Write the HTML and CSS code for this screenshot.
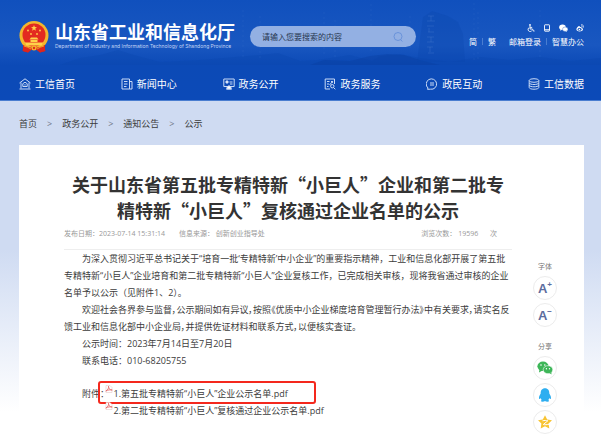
FILE: index.html
```html
<!DOCTYPE html>
<html lang="zh-CN">
<head>
<meta charset="utf-8">
<meta name="viewport" content="width=device-width, initial-scale=1">
<title>山东省工业和信息化厅</title>
<link rel="stylesheet" href="styles.css">
</head>
<body>
<header class="header">
  <svg class="scenery" viewBox="0 0 601 65" preserveAspectRatio="none" aria-hidden="true">
    <path d="M60 65L80 58L100 55L118 50L134 55L160 62L200 60L260 55L278 53L300 61L318 60L350 55L372 61L380 56L400 54L420 58L450 62L480 57L510 60L540 57L570 61L601 58V65Z" fill="#0a45ad" opacity=".3"/>
    <path d="M310 65L324 60L350 61L370 56L388 54L404 55L420 60L440 65Z" fill="#083d9f" opacity=".35"/>
    <path d="M417 62L423 17L432 11L448 16L458 22L463 34L465 62Z" fill="#0a45ad" opacity=".3"/>
    <path d="M243 10V58M260 16V60M324 12V54M335 20V60M371 4V52M410 16V50M474 3V60M478 12V60M540 10V60" stroke="#6f9ce2" stroke-dasharray="2 3" opacity=".1"/>
    <path d="M428 16h6M431 16v5M427 21h8M427 26h7M429 28v4M428 32h6M427 37h7M431 37v5M427 42h7M427 47h6M430 47v5M428 53h6" fill="none" stroke="#6f9ce2" opacity=".2"/>
  </svg>
  <div class="top">
    <a class="brand" href="#">
      <svg class="emblem" viewBox="0 0 30 32" aria-hidden="true">
        <path d="M5 24L3.500 30L9 31.500L12 29H18L21 31.500L26.500 30L25 24Z" fill="#d8201c"/>
        <circle cx="15" cy="14.500" r="14.500" fill="#f3b62d"/>
        <circle cx="15" cy="14" r="11.500" fill="#e32a20"/>
        <path d="M15 4l.8 2.100 2.200.1-1.700 1.400.6 2.200L15 8.600l-1.900 1.200.6-2.200L12 6.200l2.200-.1z" fill="#ffd24a"/>
        <g fill="#ffd24a"><circle cx="9" cy="9.500" r=".9"/><circle cx="21" cy="9.500" r=".9"/><circle cx="12" cy="13" r=".9"/><circle cx="18" cy="13" r=".9"/>
        <path d="M10.500 18.500L12 16.500H18L19.500 18.500ZM11.500 19H18.500V21H11.500ZM6 21.500H24L22.500 24.500H7.500Z"/></g>
        <path d="M4 24Q15 30 26 24L26 30L21 31.500L18 29H12L9 31.500L4 30Z" fill="#dc261e"/>
        <circle cx="15" cy="27" r="2.500" fill="#f3b62d"/><circle cx="15" cy="27" r="1.200" fill="#e32a20"/>
        <path d="M5 25q4 1 7 3M25 25q-4 1-7 3" fill="none" stroke="#f3b62d" stroke-width=".8"/>
      </svg>
      <span class="brand-text">
        <strong class="brand-name">山东省工业和信息化厅</strong>
        <span class="brand-en">Department of Industry and Information Technology of Shandong Province</span>
      </span>
    </a>
    <form class="search">
      <input class="search-input" type="text" placeholder="请输入您要搜索的内容" aria-label="搜索">
      <button class="search-button" type="button" aria-label="搜索">
        <svg viewBox="0 0 10 10"><circle cx="5" cy="4.500" r="4" /><path d="M7.500 7.500L9.300 9.500"/></svg>
      </button>
    </form>
    <div class="tools">
      <div class="tool-icons">
        <a href="#" aria-label="无障碍"><svg viewBox="0 0 8 8"><circle cx="3" cy="1" r=".9" fill="#fff"/><path d="M3 2V5H5.500L6.600 7.200L7.500 7M3.200 3.400H5.200M2.200 3.600A2.100 2.100 0 1 0 5 6.500" fill="none" stroke="#fff" stroke-width=".9"/></svg></a>
        <a href="#" aria-label="移动端"><svg viewBox="0 0 8 8"><rect x="1.500" y=".8" width="5" height="6.400" rx=".5" fill="none" stroke="#fff" stroke-width=".9"/><path d="M1.500 5.800H6.500" stroke="#fff"/></svg></a>
        <a href="#" aria-label="微信"><svg class="wide" viewBox="0 0 9 8"><ellipse cx="3.500" cy="3.200" rx="3.300" ry="2.700" fill="#fff"/><path d="M1.500 5L1.200 6.800L3 5.700Z" fill="#fff"/><ellipse cx="6.200" cy="5.200" rx="2.700" ry="2.200" fill="#fff" stroke="#1a57bd" stroke-width=".4"/><path d="M7.500 6.700L8 7.800L6.500 7.200Z" fill="#fff"/></svg></a>
        <a href="#" aria-label="微博"><svg viewBox="0 0 8 8"><path d="M3.500 2C2 2 .4 4 .4 5.300C.4 8.300 7 8 7 5.200C7 4.300 6 4.200 5.600 4C5.900 3 5 2.900 3.600 3.400C3.900 2.800 3.900 2 3.500 2Z" fill="#fff"/><ellipse cx="3.600" cy="5.400" rx="2" ry="1.300" fill="#1a57bd"/><circle cx="3.400" cy="5.500" r=".8" fill="#fff"/><path d="M5 .8C7 .4 8 2 7.400 3.600M5.200 2.100C6.200 1.900 6.500 2.600 6.300 3.300" fill="none" stroke="#fff" stroke-width=".7"/></svg></a>
      </div>
      <div class="tool-links">
        <a href="#">简</a><span class="bar"></span><a href="#">繁</a>
        <a class="mail" href="#">邮箱登录</a><span class="bar"></span><a href="#">智慧办公</a>
      </div>
    </div>
  </div>
  <nav class="nav">
    <a href="#"><svg viewBox="0 0 12 12"><path d="M.5 5L6 .8L11.500 5M2 4.500V10.500M10 4.500V10.500M.5 11H11.500"/><path d="M6 4.200L8.200 5.700V8.500H3.800V5.700Z"/><path d="M6 6.200V7.500"/></svg>工信首页</a>
    <a href="#"><svg viewBox="0 0 12 12"><path d="M1 1H8.500V11H1ZM8.500 3.500H11V11H8.500M3 3.500H6.500M3 6H6.500M3 8.500H5.500"/></svg>新闻中心</a>
    <a href="#"><svg viewBox="0 0 12 12"><path d="M.8 1H11.200V8.500H.8ZM6.500 4H9.500M7 6H9.500M3 11H9"/><path d="M3 3H5V5H3ZM4 9.500L6 7.500L8 9.500V11H4Z" fill="#fff"/></svg>政务公开</a>
    <a href="#"><svg viewBox="0 0 12 12"><path d="M10.500 6V1H1.200V11H6M3 3.500H5.500M3 6H5M3 8.500H4.500M7 3L8.800 4.800M9 3L5.500 7"/><circle cx="8.300" cy="8.200" r="1.700"/><path d="M9.500 9.500L11.300 11.300"/></svg>政务服务</a>
    <a href="#"><svg viewBox="0 0 12 12"><path d="M2 10A5.200 5.200 0 1 1 4.500 11.200L1.500 11.300Z"/><path d="M4 5H8M4 7H8"/></svg>政民互动</a>
    <a href="#"><svg viewBox="0 0 12 12"><ellipse cx="6" cy="2.500" rx="4.800" ry="1.800"/><path d="M1.200 2.500V9.500C1.200 11.800 10.800 11.800 10.800 9.500V2.500M1.200 5C2 7 10 7 10.800 5M1.200 7.300C2 9.300 10 9.300 10.800 7.300"/></svg>工信数据</a>
  </nav>
</header>
<nav class="crumbs" aria-label="面包屑">
  <a href="#">首页</a><span>&gt;</span><a href="#">政务公开</a><span>&gt;</span><a href="#">通知公告</a><span>&gt;</span><a href="#">公示</a>
</nav>
<main class="card">
  <article class="article">
    <h1 class="title">关于山东省第五批专精特新“小巨人”企业和第二批专精特新“小巨人”复核通过企业名单的公示</h1>
    <div class="meta">
      <span>发布日期：2023-07-14 15:31:14</span>
      <span>信息来源： 创新创业指导处</span>
      <span class="views">浏览次数： 19596 <span class="unit">次</span></span>
    </div>
    <div class="content">
      <p>为深入贯彻习近平总书记关于“培育一批‘专精特新’中小企业”的重要指示精神，工业和信息化部开展了第五批专精特新“小巨人”企业培育和第二批专精特新“小巨人”企业复核工作，已完成相关审核，现将我省通过审核的企业名单予以公示（见附件1、2）。</p>
      <p class="notice">欢迎社会各界参与监督，公示期间如有异议，按照《优质中小企业梯度培育管理暂行办法》中有关要求，请实名反馈工业和信息化部中小企业局，并提供佐证材料和联系方式，以便核实查证。</p>
      <p>公示时间：2023年7月14日至7月20日</p>
      <p>联系电话：010-68205755</p>
      <div class="attachments">
        <span class="attachments-label">附件：</span>
        <ul>
          <li class="marked"><svg viewBox="0 0 8 8" aria-hidden="true"><path d="M1 .5H5L7 2.500V7.500H1Z" fill="#fff" stroke="#e4c9c9" stroke-width=".6"/><path d="M.8 6C3 5 3.800 3 3.500 1.200C3.700 4 5 5 7.200 5C5 4.500 3 5 .8 6Z" fill="none" stroke="#e46464" stroke-width=".8"/></svg><a href="#">1.第五批专精特新“小巨人”企业公示名单.pdf</a></li>
          <li><svg viewBox="0 0 8 8" aria-hidden="true"><path d="M1 .5H5L7 2.500V7.500H1Z" fill="#fff" stroke="#e4c9c9" stroke-width=".6"/><path d="M.8 6C3 5 3.800 3 3.500 1.200C3.700 4 5 5 7.200 5C5 4.500 3 5 .8 6Z" fill="none" stroke="#e46464" stroke-width=".8"/></svg><a href="#">2.第二批专精特新“小巨人”复核通过企业公示名单.pdf</a></li>
        </ul>
      </div>
    </div>
  </article>
  <aside class="side">
    <div class="side-group">
      <span class="side-label">字体</span>
      <button class="round" type="button" aria-label="放大字体">A<sup>+</sup></button>
      <button class="round" type="button" aria-label="缩小字体">A<sup>−</sup></button>
    </div>
    <div class="side-group">
      <span class="side-label">分享</span>
      <button class="round" type="button" aria-label="分享到微信"><svg viewBox="0 0 16 16"><ellipse cx="6" cy="6.300" rx="5.600" ry="4.800" fill="#3db658"/><path d="M2.500 9L2 12.500L5.500 10.500Z" fill="#3db658"/><ellipse cx="11" cy="9.700" rx="4.800" ry="4" fill="#3db658" stroke="#fff" stroke-width=".6"/><path d="M12.500 13L14.500 14.500L14.300 12Z" fill="#3db658"/><g fill="#fff"><circle cx="4" cy="5" r=".8"/><circle cx="7.800" cy="5" r=".8"/><circle cx="9.400" cy="8.700" r=".7"/><circle cx="12.500" cy="8.700" r=".7"/></g></svg></button>
      <button class="round" type="button" aria-label="分享到QQ"><svg viewBox="0 0 16 16"><path d="M8 1.200C5 1.200 3.500 3.500 3.700 6.500C2.500 8.300 1.500 10.500 2.200 12C2.600 12.300 3.200 11.600 3.600 11C3.900 12 4.300 12.500 4.800 13C3.500 13.500 3.600 14.800 5.500 14.800C6.700 14.800 7.500 14.500 8 14C8.500 14.500 9.300 14.800 10.500 14.800C12.400 14.800 12.500 13.500 11.200 13C11.700 12.500 12.100 12 12.400 11C12.800 11.600 13.400 12.300 13.800 12C14.500 10.500 13.500 8.300 12.300 6.500C12.500 3.500 11 1.200 8 1.200Z" fill="#2eaef0"/></svg></button>
      <button class="round" type="button" aria-label="分享到QQ空间"><svg viewBox="0 0 16 16"><path d="M8 1.200L10.200 5.500L15 6.300L11.600 9.600L12.300 14.500L8 12.300L3.700 14.500L4.400 9.600L1 6.300L5.800 5.500Z" fill="#f8c433"/><path d="M5.500 6.800C7.500 6.300 9 6.400 10.800 6.800L6.300 10.500C8 10.900 9.800 10.800 12 10.200" fill="none" stroke="#fff"/></svg></button>
    </div>
  </aside>
</main>
</body>
</html>
```

FILE: styles.css
```css
* {
  box-sizing: border-box;
}

body {
  margin: 0;
  min-height: 100vh;
  display: flex;
  flex-direction: column;
  overflow: hidden;
  font-family: "Open Sans", "Noto Sans CJK SC", sans-serif;
  font-size: 9px;
  color: #3c3c3c;
  background: linear-gradient(#cfdbf2 0, #cfdbf2 250px, #fff 412px);
}

a {
  color: inherit;
  text-decoration: none;
}

button,
input {
  font: inherit;
  border: 0;
  padding: 0;
  background: none;
}

svg {
  display: block;
  flex: none;
}

.header {
  position: relative;
  color: #fff;
  border-bottom: 1px solid #4a7dd0;
  background: linear-gradient(#1050bd 0, #1957c0 45px, #0c4ab6 65px, #0c4ab8 100px);
}

.scenery {
  position: absolute;
  top: 0;
  left: 0;
  width: 100%;
  height: 65px;
}

.top {
  position: relative;
  display: flex;
  align-items: center;
  height: 67px;
  padding: 6px 17px 0 19px;
}

.brand {
  display: flex;
  align-items: center;
  gap: 6px;
}

.emblem {
  width: 30px;
  height: 32px;
}

.brand-text {
  display: flex;
  flex-direction: column;
  padding-bottom: 4px;
}

.brand-name {
  font: bold 18px/23px "Noto Sans CJK SC", sans-serif;
}

.brand-en {
  font: 5px/6px Inter, "Liberation Sans", sans-serif;
  color: #c3d5f5;
  white-space: nowrap;
}

.search {
  display: flex;
  align-items: center;
  width: 166px;
  height: 21px;
  margin-left: 15px;
  padding: 0 13px 0 12px;
  border-radius: 11px;
  background: #93b0e3;
}

.search-input {
  flex: 1;
  min-width: 0;
  font-size: 8px;
  outline: 0;
}

.search-input::placeholder {
  color: #27364f;
  opacity: 1;
}

.search-button svg {
  width: 10px;
  height: 10px;
  fill: none;
  stroke: #6a93da;
}

.tools {
  margin-left: auto;
  display: flex;
  flex-direction: column;
  align-items: flex-end;
  gap: 4px;
  padding-bottom: 2px;
}

.tool-icons {
  display: flex;
  gap: 8px;
}

.tool-icons svg {
  width: 8px;
  height: 8px;
}

.tool-icons .wide {
  width: 9px;
}

.tool-links {
  display: flex;
  align-items: center;
  font-size: 8px;
  line-height: 12px;
}

.bar {
  width: 1px;
  height: 7px;
  margin: 0 5px;
  background: #4a7dd0;
}

.mail {
  margin-left: 13px;
}

.nav {
  display: flex;
  justify-content: space-between;
  align-items: center;
  height: 33px;
  padding: 0 17px 0 19px;
  font-size: 10px;
  line-height: 14px;
}

.nav a {
  display: flex;
  align-items: center;
  gap: 4px;
}

.nav svg {
  width: 12px;
  height: 12px;
  fill: none;
  stroke: #c9daf6;
  stroke-width: 1;
}

.crumbs {
  display: flex;
  align-items: center;
  height: 44px;
  padding: 0 19px;
}

.crumbs span {
  margin: 0 10px;
  color: #6e7685;
}

.card {
  flex: 1;
  display: flex;
  margin: 0 17px 0 19px;
  padding: 26px 27px 0 45px;
  background: #fff;
}

.article {
  flex: 1;
  min-width: 0;
}

.title {
  margin: 0;
  font: bold 18px/26px "Noto Sans CJK SC", sans-serif;
  text-align: center;
  color: #333;
}

.meta {
  display: flex;
  gap: 14px;
  height: 27px;
  padding-top: 4px;
  font-size: 7px;
  line-height: 14px;
  color: #999;
  border-bottom: 1px solid #eee;
}

.views {
  margin-left: auto;
  padding-right: 15px;
}

.unit {
  margin-left: 10px;
}

.content {
  line-height: 17px;
}

.content p {
  margin: 0;
  text-indent: 2em;
}

.content .notice,
.attachments-label {
  font-feature-settings: "palt";
}

.attachments {
  display: flex;
  margin-top: 16px;
  padding-left: 18px;
}

.attachments ul {
  display: flex;
  flex-direction: column;
  align-items: flex-start;
  margin: 0;
  padding: 0;
  list-style: none;
}

.attachments li {
  position: relative;
  display: flex;
  gap: 1px;
}

.attachments svg {
  width: 8px;
  height: 8px;
}

.marked::after {
  content: "";
  position: absolute;
  inset: -4px -28px -2px -7px;
  border: 2px solid #f4281d;
  border-radius: 3px;
  pointer-events: none;
}

.side {
  display: flex;
  flex-direction: column;
  gap: 14px;
  margin-left: 21px;
  padding-top: 90px;
}

.side-group {
  display: flex;
  flex-direction: column;
  align-items: center;
  gap: 3px;
}

.side-label {
  font-size: 7px;
  line-height: 12px;
  color: #777;
}

.round {
  display: flex;
  align-items: center;
  justify-content: center;
  width: 24px;
  height: 24px;
  border: 1px solid #ececec;
  border-radius: 50%;
  background: #fff;
  color: #5d6d9e;
  font: bold 13px/13px "Liberation Sans", sans-serif;
}

.round sup {
  font-size: 8px;
  line-height: 8px;
  align-self: flex-start;
  margin-top: 4px;
}

.round svg {
  width: 16px;
  height: 16px;
}
```
